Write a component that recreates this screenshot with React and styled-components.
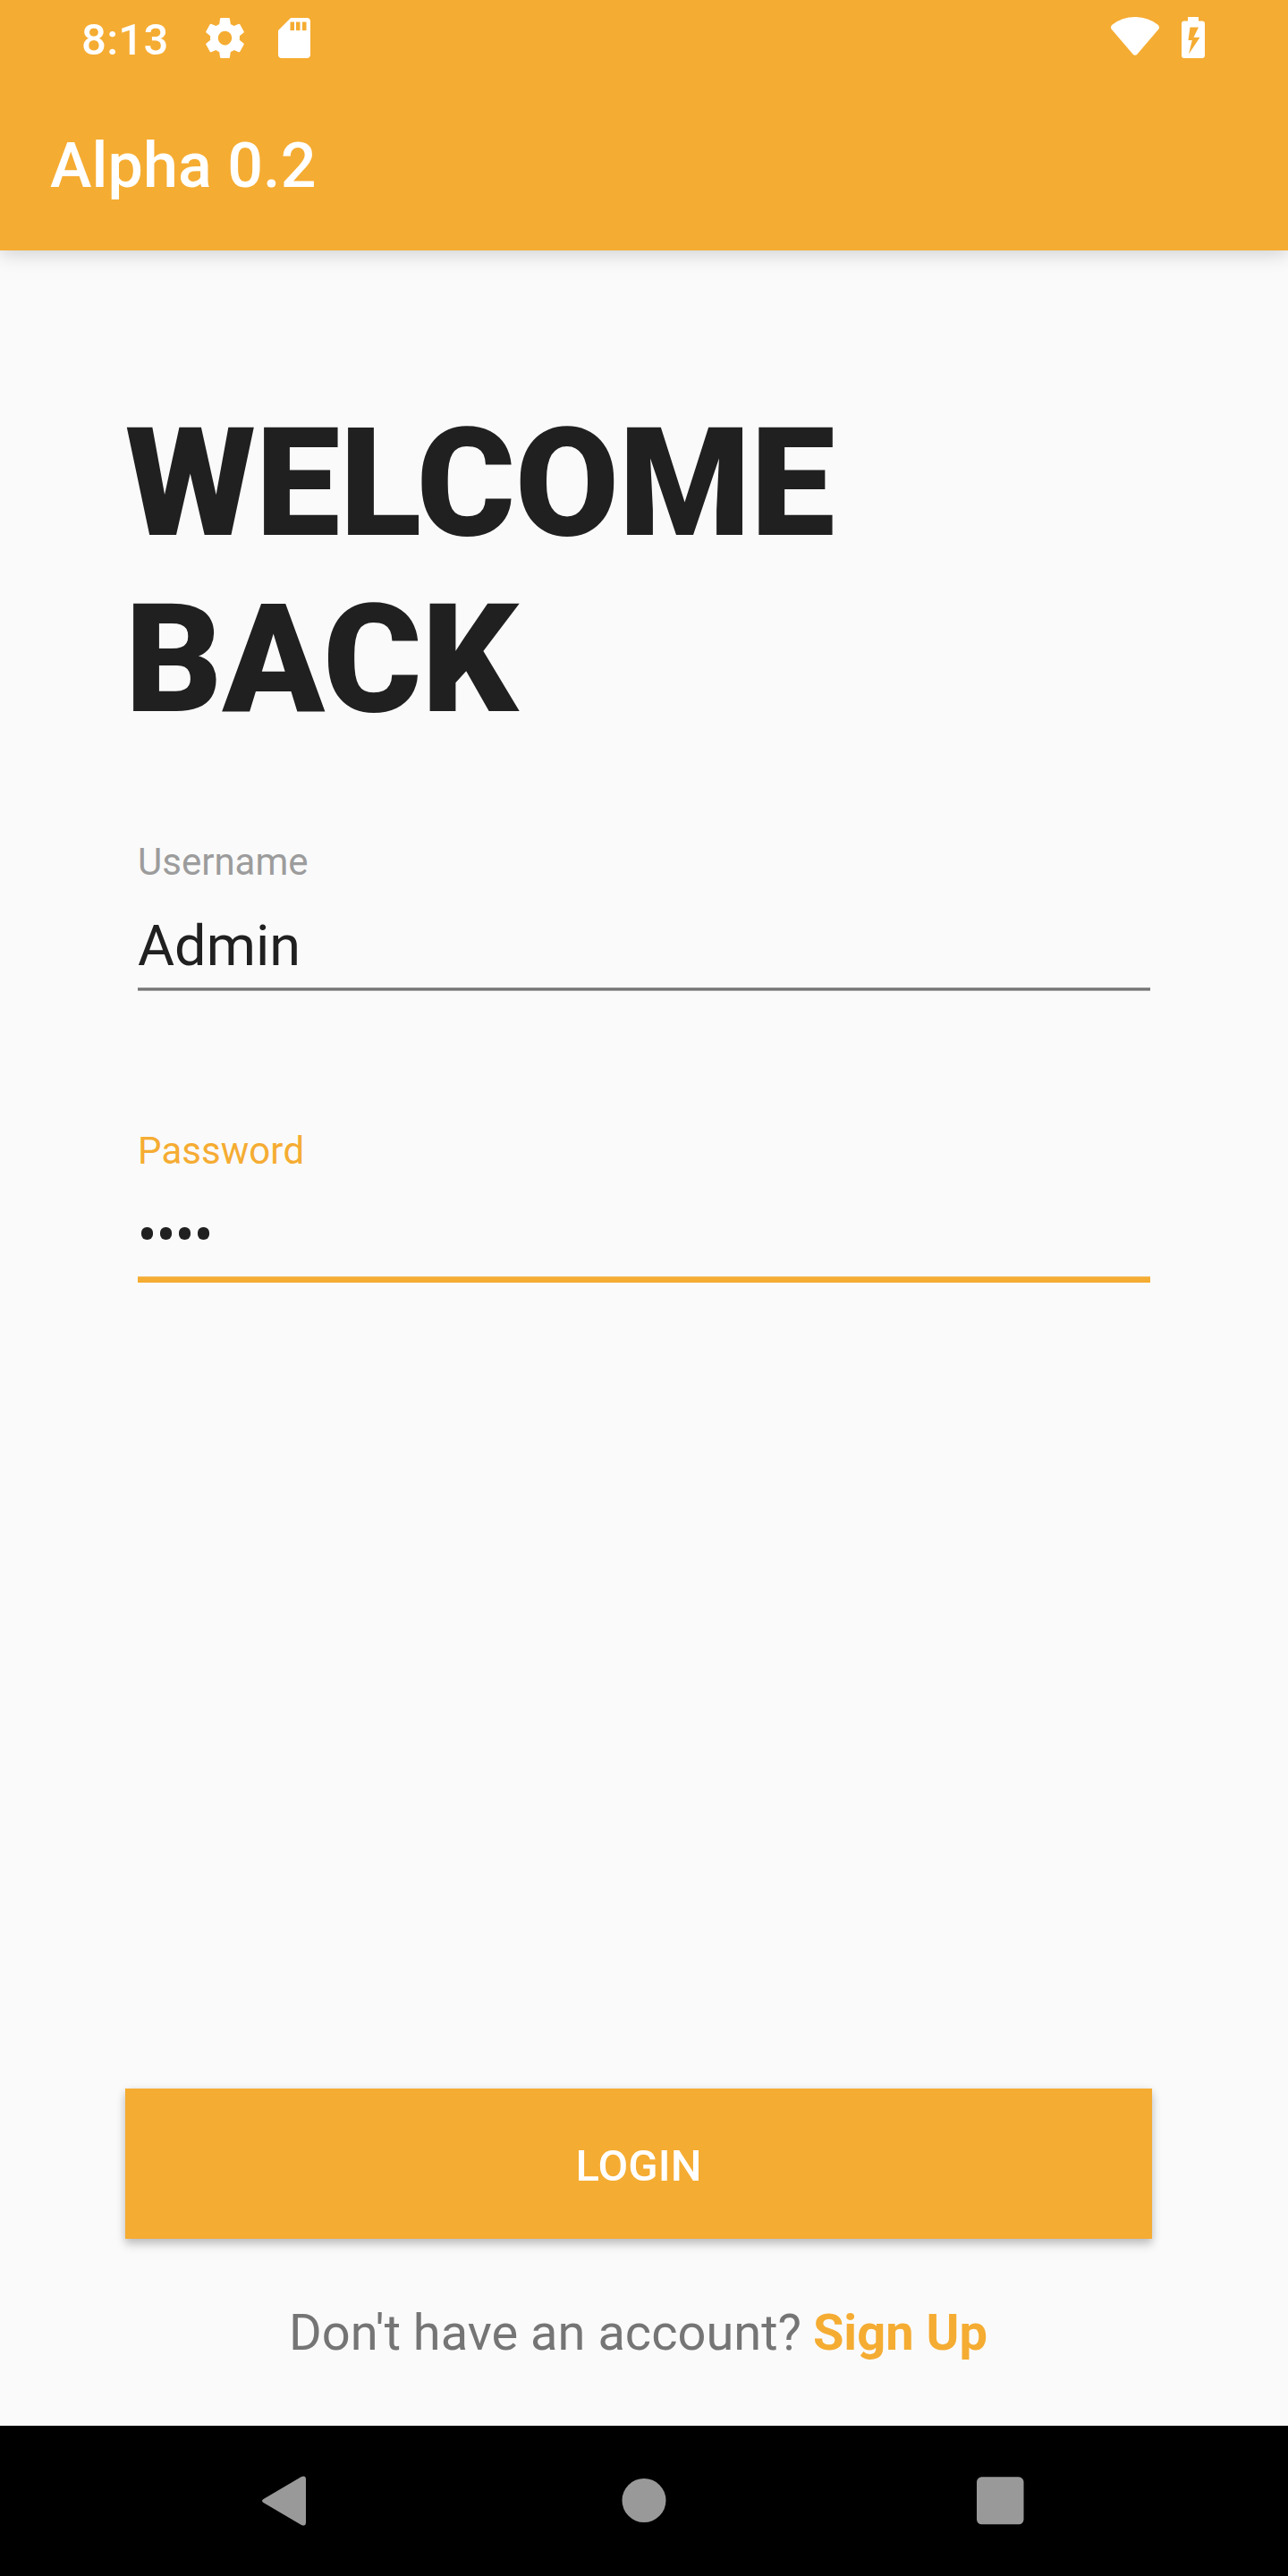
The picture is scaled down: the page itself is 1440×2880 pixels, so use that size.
import React from "react";
import styled, { createGlobalStyle } from "styled-components";

const ORANGE = "#f5ac32";
const INK = "#202020";

const GlobalStyle = createGlobalStyle`
  * { box-sizing: border-box; }
  body { margin: 0; background: #fafafa; font-family: Roboto, "Liberation Sans", sans-serif; }
`;

const Screen = styled.div`
  width: 1440px;
  height: 2880px;
  display: flex;
  flex-direction: column;
  background: #fafafa;
  overflow: hidden;
`;

const Header = styled.header`
  height: 280px;
  flex: none;
  background: ${ORANGE};
  color: #fff;
  box-shadow: 0 4px 20px rgba(0, 0, 0, 0.17);
`;

const StatusBar = styled.div`
  height: 84px;
  display: flex;
  align-items: flex-start;
  padding: 16px 93px 0 91px;
`;

const Clock = styled.span`
  width: 139px;
  font-size: 49px;
  font-weight: 500;
  line-height: 57px;
  letter-spacing: 0.3px;
  white-space: nowrap;
`;

const StatusIcon = styled.svg`
  display: block;
  flex: none;
  width: ${(p) => p.$w}px;
  height: ${(p) => p.$h}px;
  margin-top: ${(p) => p.$top}px;
  margin-left: ${(p) => p.$left || 0}px;
  fill: #fff;
`;

const Spacer = styled.div`
  flex: 1;
`;

const AppTitle = styled.h1`
  margin: 0;
  padding: 60px 56px 0;
  font-size: 70px;
  font-weight: 500;
  line-height: 82px;
  letter-spacing: 0.1px;
`;

const Content = styled.main`
  flex: 1;
  display: flex;
  flex-direction: column;
  padding: 162px 152px 0 140px;
`;

const Heading = styled.h2`
  margin: 0 0 103px;
  font-size: 168px;
  line-height: 197px;
  font-weight: 900;
  color: ${INK};
`;

const Field = styled.label`
  display: flex;
  flex-direction: column;
  width: 1132px;
  height: 323px;
  margin-left: 14px;
`;

const FieldLabel = styled.span`
  font-size: 42px;
  line-height: 50px;
  font-kerning: ${(p) => (p.$active ? "none" : "auto")};
  color: ${(p) => (p.$active ? ORANGE : "#9c9c9c")};
`;

const FieldValue = styled.span`
  margin-top: 32px;
  font-size: 63px;
  line-height: 74px;
  color: ${INK};
`;

const Dots = styled.span`
  display: flex;
  gap: 8px;
  height: 74px;
  margin-top: 32px;
  padding: 28px 0 0 4px;
`;

const Dot = styled.span`
  width: 13px;
  height: 14px;
  border-radius: 6px;
  background: ${INK};
`;

const Underline = styled.span`
  height: ${(p) => (p.$active ? 7 : 4)}px;
  margin-top: 9px;
  background: ${(p) => (p.$active ? ORANGE : "#757575")};
  border-top: 1px solid ${(p) => (p.$active ? "#f3bb62" : "#959595")};
  border-bottom: ${(p) => (p.$active ? "0" : "1px solid #a4a4a4")};
`;

const LoginButton = styled.button`
  width: 1148px;
  height: 168px;
  margin: auto 0 0;
  padding: 4px 0 0;
  border: 0;
  background: ${ORANGE};
  color: #fff;
  font: 500 49px/57px Roboto, sans-serif;
  letter-spacing: 0.1px;
  box-shadow: 0 7px 10px rgba(0, 0, 0, 0.17), 0 2px 9px rgba(0, 0, 0, 0.12);
`;

const Footer = styled.p`
  margin: 72px 1px 0 0;
  height: 137px;
  font-size: 56px;
  line-height: 66px;
  text-align: center;
  white-space: nowrap;
  color: #757575;
`;

const SignUp = styled.a`
  margin-left: -1px;
  color: ${ORANGE};
  font-weight: 700;
`;

const NavBar = styled.nav`
  flex: none;
  height: 168px;
  display: flex;
  align-items: center;
  justify-content: space-between;
  padding: 0 295px 0 291px;
  background: #000;
`;

const NavIcon = styled.svg`
  display: block;
  width: ${(p) => p.$w}px;
  height: 56px;
  fill: #999;
`;

export default function App() {
  return (
    <Screen>
      <GlobalStyle />
      <Header>
        <StatusBar>
          <Clock>8:13</Clock>
          <StatusIcon $w={43} $h={45} $top={4} viewBox="2.2 2 19.6 20" preserveAspectRatio="none">
            <path d="M19.43 12.98c.04-.32.07-.64.07-.98s-.03-.66-.07-.98l2.11-1.65c.19-.15.24-.42.12-.64l-2-3.46c-.12-.22-.39-.3-.61-.22l-2.49 1c-.52-.4-1.08-.73-1.69-.98l-.38-2.65C14.46 2.18 14.25 2 14 2h-4c-.25 0-.46.18-.49.42l-.38 2.65c-.61.25-1.17.59-1.69.98l-2.49-1c-.23-.09-.49 0-.61.22l-2 3.46c-.13.22-.07.49.12.64l2.11 1.65c-.04.32-.07.65-.07.98s.03.66.07.98l-2.11 1.65c-.19.15-.24.42-.12.64l2 3.46c.12.22.39.3.61.22l2.49-1c.52.4 1.08.73 1.69.98l.38 2.65c.03.24.24.42.49.42h4c.25 0 .46-.18.49-.42l.38-2.65c.61-.25 1.17-.59 1.69-.98l2.49 1c.23.09.49 0 .61-.22l2-3.46c.12-.22.07-.49-.12-.64l-2.11-1.65zM12 15.5c-1.93 0-3.5-1.57-3.5-3.5s1.57-3.5 3.5-3.5 3.5 1.57 3.5 3.5-1.57 3.5-3.5 3.5z" />
          </StatusIcon>
          <StatusIcon $w={36} $h={45} $top={4} $left={37.5} viewBox="0 0 36 45">
            <path fillRule="evenodd" d="M14 0H32Q36 0 36 4V41Q36 45 32 45H4Q0 45 0 41V14ZM13.5 4.5V14H18V4.500ZM20 4.500V14H24.500V4.500ZM27 4.500V14H31.500V4.500Z" />
          </StatusIcon>
          <Spacer />
          <StatusIcon $w={54} $h={43} $top={3} viewBox="0 0 54 43">
            <path d="M1 9Q-1 12 1 14L24.500 41.500Q27 44 29.500 41.500L53 14Q55 12 53 9Q42 0 27 0T1 9Z" />
          </StatusIcon>
          <StatusIcon $w={26} $h={46} $top={3} $left={25} viewBox="0 0 26 46">
            <path fillRule="evenodd" d="M7 0H19V4.500H23Q26 4.500 26 7.500V43Q26 46 23 46H3Q0 46 0 43V7.500Q0 4.500 3 4.500H7ZM9.500 11.500L7.500 26H11.800L8 41.500L20.500 22.700H13.500L19 11.500Z" />
          </StatusIcon>
        </StatusBar>
        <AppTitle>Alpha 0.2</AppTitle>
      </Header>
      <Content>
        <Heading>
          WELCOME
          <br />
          BACK
        </Heading>
        <Field>
          <FieldLabel>Username</FieldLabel>
          <FieldValue>Admin</FieldValue>
          <Underline />
        </Field>
        <Field>
          <FieldLabel $active>Password</FieldLabel>
          <Dots>
            <Dot />
            <Dot />
            <Dot />
            <Dot />
          </Dots>
          <Underline $active />
        </Field>
        <LoginButton>LOGIN</LoginButton>
        <Footer>
          Don't have an account? <SignUp>Sign Up</SignUp>
        </Footer>
      </Content>
      <NavBar>
        <NavIcon $w={52} viewBox="0 0 52 56">
          <path d="M3.500 26L46 1Q51 -1 51 4V52Q51 57 46 55L3.500 30Q.5 28 3.500 26Z" />
        </NavIcon>
        <NavIcon $w={54} viewBox="0 0 54 56">
          <circle cx="29" cy="27.500" r="24.500" />
        </NavIcon>
        <NavIcon $w={53} viewBox="0 0 53 56">
          <rect x="0" y="1.300" width="52.500" height="53" rx="5.500" />
        </NavIcon>
      </NavBar>
    </Screen>
  );
}
